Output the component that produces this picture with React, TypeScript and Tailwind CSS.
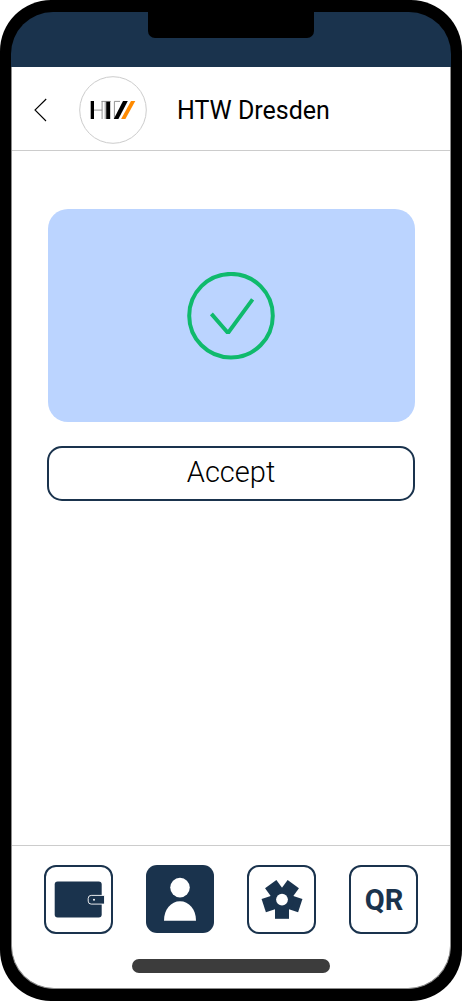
import type { ReactNode } from "react";

function HtwLogo() {
  return (
    <svg width="68" height="68" viewBox="0 0 68 68" className="ml-[31px] shrink-0">
      <circle cx="34" cy="34" r="33.3" fill="#fff" stroke="#ccc" strokeWidth="1" />
      <path d="M11.7 25H15v18h-3.3z M27.2 25h4v18h-4z" fill="#000" />
      <path d="M15 34.1h8.2M23.1 25v18M22.6 25.4h9M26.2 25v18M35.4 43V25.4H41" fill="none" stroke="#888" strokeWidth=".9" />
      <path d="M44 25h4.8L39.4 43H34.8z" fill="#000" />
      <path d="M52 25h4.3L46.4 43h-4.3z" fill="#ff8a00" />
    </svg>
  );
}

function Tile({ label, active, children }: { label: string; active?: boolean; children: ReactNode }) {
  return (
    <button
      aria-label={label}
      className={
        active
          ? "flex h-[68px] w-[68px] items-center justify-center rounded-[11px] bg-[#1a334d]"
          : "flex h-[69px] w-[69px] items-center justify-center rounded-[12px] border-2 border-[#1a334d] bg-white"
      }
    >
      {children}
    </button>
  );
}

export default function App() {
  return (
    <div className="h-[1001px] w-[462px] overflow-hidden bg-white font-['Roboto',sans-serif]">
      <div className="h-[1001px] w-[462px] rounded-[51px] bg-black px-[11px] pt-[12px] pb-[12px]">
        <div className="flex h-[977px] flex-col">
          <div className="flex h-[55px] shrink-0 justify-center rounded-t-[42px] bg-[#1a334d]">
            <div className="h-[25.5px] w-[166px] rounded-b-[7px] bg-black" />
          </div>
          <div className="flex min-h-0 flex-1 flex-col rounded-b-[43px] border-x border-b border-[#8c8c8c] bg-white">
            <header className="flex h-[84px] shrink-0 items-center border-b border-[#ccc] pt-[2px] pl-[22px]">
              <svg width="14" height="24" viewBox="0 0 14 24" fill="none" stroke="#000" strokeWidth="1.1">
                <path d="M12.2 1L1 12l11 11" />
              </svg>
              <HtwLogo />
              <h1 className="ml-[30px] pt-[2px] text-[25px] leading-[30px] whitespace-nowrap text-black">HTW Dresden</h1>
            </header>

            <main className="flex min-h-0 flex-1 flex-col items-center pt-[58px]">
              <div className="flex h-[213px] w-[367px] items-center justify-center rounded-[20px] bg-[#bbd4ff]">
                <svg width="88" height="88" viewBox="0 0 88 88" fill="none" stroke="#0fba6c">
                  <circle cx="44" cy="43.7" r="41.8" strokeWidth="4" />
                  <path d="M24.4 41.9L40.2 60h1.5L65.6 27.3" strokeWidth="3.9" />
                </svg>
              </div>
              <button className="mt-[24px] flex h-[55px] w-[368px] items-center justify-center rounded-[15px] border-2 border-[#1a334d] bg-white pb-[4px] text-[29px] leading-[34px] font-light text-black">
                Accept
              </button>
            </main>

            <footer className="flex h-[143px] shrink-0 flex-col border-t border-[#ccc]">
              <nav className="flex justify-between pt-[19px] pr-[32px] pl-[32px]">
                <Tile label="Wallet">
                  <svg width="52" height="38" viewBox="0 0 52 38">
                    <rect x="1.7" y=".6" width="47" height="36" rx="3" fill="#1a334d" />
                    <path d="M51.5 14.4H38.2a3 3 0 0 0-3 3v2.7a3 3 0 0 0 3 3h13.3z" fill="#1a334d" stroke="#fff" strokeWidth=".9" />
                    <circle cx="41" cy="18.7" r="1" fill="#fff" />
                  </svg>
                </Tile>
                <Tile label="Profile" active>
                  <svg width="34" height="44" viewBox="0 0 34 44" fill="#fff">
                    <circle cx="17" cy="10.6" r="9.8" />
                    <path d="M1 43.8C1 32.3 8 24.3 17 24.3s16 8 16 19.5z" />
                  </svg>
                </Tile>
                <Tile label="Settings">
                  <svg width="42" height="42" viewBox="0 0 42 42">
                    <g fill="#1a334d">
                      <path d="M14 20.6h14v19.2H14z" />
                      <path d="M14 20.6h14v19.2H14z" transform="rotate(72 21 20.6)" />
                      <path d="M14 20.6h14v19.2H14z" transform="rotate(144 21 20.6)" />
                      <path d="M14 20.6h14v19.2H14z" transform="rotate(216 21 20.6)" />
                      <path d="M14 20.6h14v19.2H14z" transform="rotate(288 21 20.6)" />
                      <circle cx="21" cy="20.6" r="11.7" />
                    </g>
                    <circle cx="21" cy="20.6" r="5.9" fill="#fff" />
                  </svg>
                </Tile>
                <Tile label="Scan code">
                  <span className="pt-[1px] pl-[1px] text-[29px] leading-[34px] font-bold text-[#1a334d]">QR</span>
                </Tile>
              </nav>
              <div className="mt-[25px] h-[14px] w-[198px] self-center rounded-full bg-[#3c3c3c]" />
            </footer>
          </div>
        </div>
      </div>
    </div>
  );
}
